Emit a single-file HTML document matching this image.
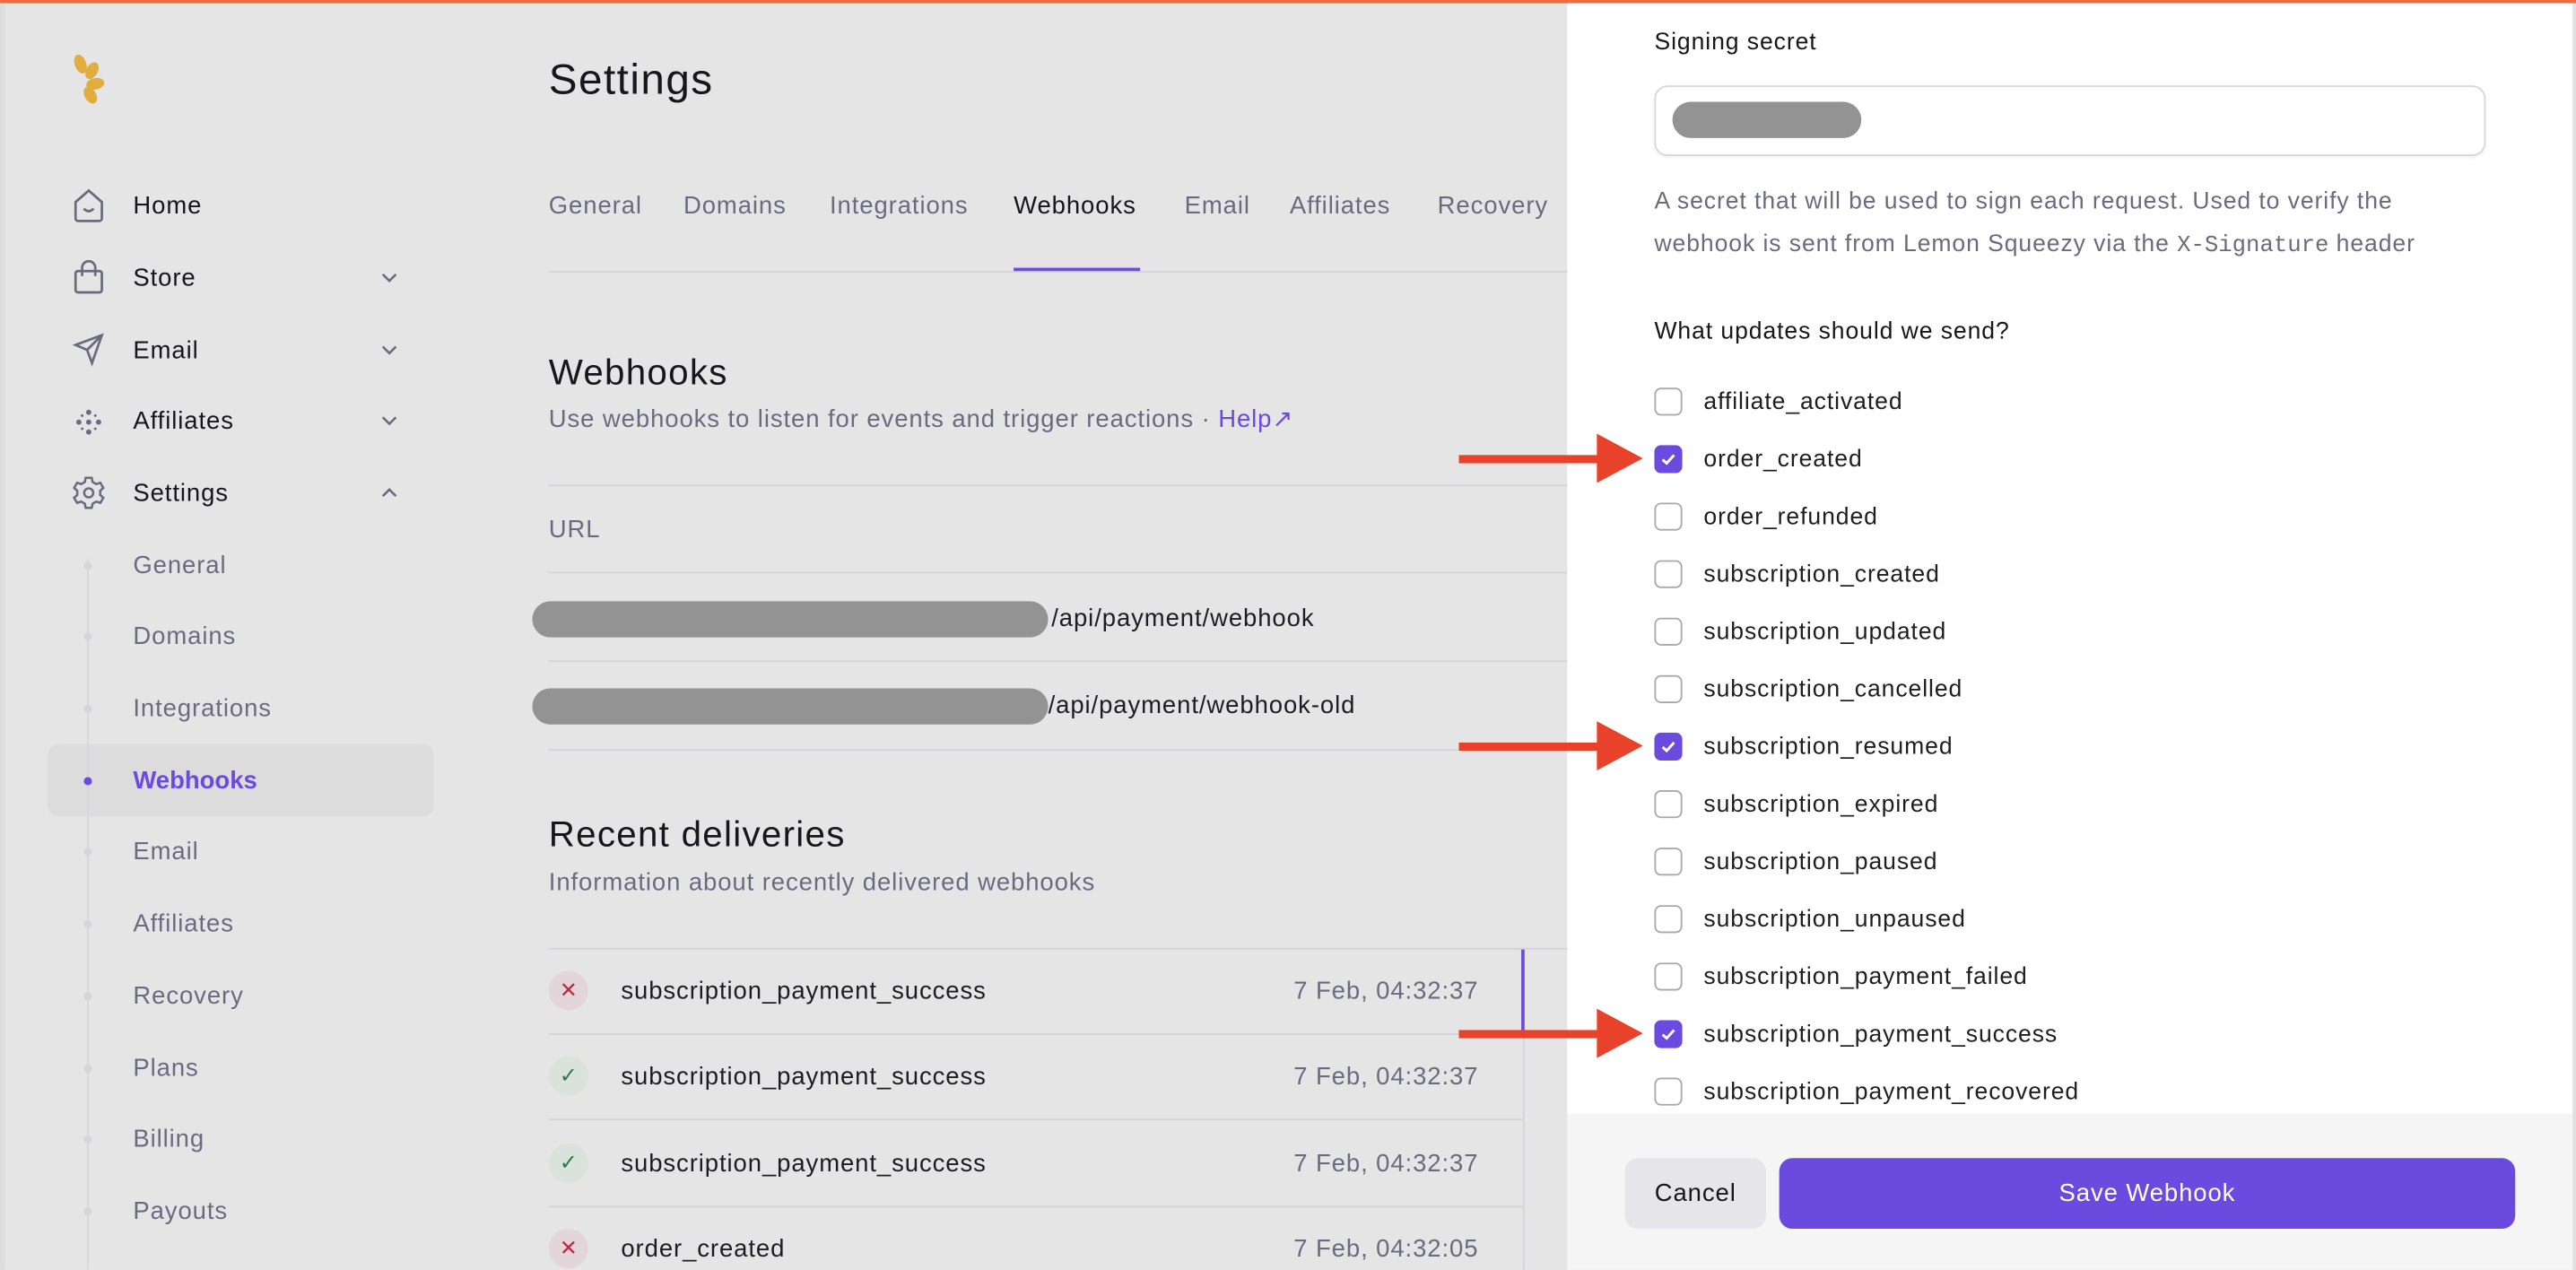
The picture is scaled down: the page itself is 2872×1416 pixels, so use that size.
<!DOCTYPE html>
<html><head><meta charset="utf-8">
<style>
*{margin:0;padding:0;box-sizing:border-box}
html,body{width:2872px;height:1416px;overflow:hidden;background:#e5e5e5}
#s{position:absolute;left:0;top:0;width:1568px;height:773px;transform:scale(1.83163);transform-origin:0 0;font-family:"Liberation Sans",sans-serif;background:#e5e5e6;overflow:hidden;letter-spacing:.5px}
.a{position:absolute;white-space:nowrap}
.t{line-height:20px;transform:translateY(-9px)}
.nav{font-size:15px;color:#17161c;left:81px}
.sub{font-size:15px;color:#6b6a80;left:81px}
.dot{position:absolute;left:51px;width:5px;height:5px;border-radius:50%;background:#d6d6da}
.tab{font-size:15px;color:#6b6a80;top:125px}
.hl{position:absolute;height:1px;background:#d3d3d9}
.pill{position:absolute;background:#939393;border-radius:11px}
.ic{position:absolute;left:334px;width:24px;height:24px;border-radius:50%;font-size:13px;text-align:center;line-height:24px;letter-spacing:0}
.name{left:378px;font-size:15px;color:#1e1d24}
.date{right:668px;font-size:15px;color:#6b6a80}
.cb{position:absolute;left:1007px;width:17px;height:17px;border:1.5px solid #a9a9ad;border-radius:4px;background:#fff}
.cb.on{background:#6b4ae0;border-color:#6b4ae0}
.cl{left:1037px;font-size:14.5px;color:#1e1d24}
.arr{position:absolute;left:888px;width:112px;height:30px}
</style></head><body>
<div id="s">
<div style="position:absolute;left:0;top:0;width:1568px;height:2px;background:#ef6a3e"></div>
<div style="position:absolute;left:0;top:2px;width:3px;height:771px;background:#dcdcdc"></div>
<!-- logo -->
<svg class="a" style="left:43px;top:32px" width="26" height="32" viewBox="0 0 26 32">
<ellipse cx="6" cy="7" rx="3.5" ry="6" fill="#e2ad3f" transform="rotate(-20 6 7)"/>
<ellipse cx="13" cy="11" rx="3.5" ry="5.5" fill="#e2ad3f" transform="rotate(30 13 11)"/>
<ellipse cx="15" cy="19" rx="3.5" ry="5.5" fill="#e2ad3f" transform="rotate(80 15 19)"/>
<ellipse cx="12" cy="26" rx="3.5" ry="5.5" fill="#e2ad3f" transform="rotate(-30 12 26)"/>
</svg>
<!-- nav icons -->
<svg class="a" style="left:44px;top:114px" width="20" height="22" viewBox="0 0 20 22" fill="none" stroke="#6b6a80" stroke-width="1.5"><path d="M2 9 L10 2 L18 9 V19 a1.5 1.5 0 0 1 -1.5 1.5 H3.5 A1.5 1.5 0 0 1 2 19Z"/><path d="M7 13 q3 3 6 0"/></svg>
<svg class="a" style="left:44px;top:158px" width="20" height="22" viewBox="0 0 20 22" fill="none" stroke="#6b6a80" stroke-width="1.5"><rect x="2" y="7" width="16" height="13" rx="1.5"/><path d="M6 10 V5 a4 4 0 0 1 8 0 V10"/></svg>
<svg class="a" style="left:44px;top:202px" width="20" height="22" viewBox="0 0 20 22" fill="none" stroke="#6b6a80" stroke-width="1.5"><path d="M2 8 L18 2 L12 19 L9 11 Z M9 11 L18 2"/></svg>
<svg class="a" style="left:44px;top:246px" width="20" height="22" viewBox="0 0 20 22" fill="#6b6a80"><circle cx="10" cy="5" r="1.6"/><circle cx="10" cy="11" r="1.6"/><circle cx="10" cy="17" r="1.6"/><circle cx="4" cy="11" r="1.6"/><circle cx="16" cy="11" r="1.6"/><circle cx="6" cy="7" r=".8"/><circle cx="14" cy="7" r=".8"/><circle cx="6" cy="15" r=".8"/><circle cx="14" cy="15" r=".8"/></svg>
<svg class="a" style="left:43px;top:288px" width="22" height="24" viewBox="0 0 24 24" fill="none" stroke="#6b6a80" stroke-width="1.5"><circle cx="12" cy="12" r="3"/><path d="M10 2h4l.6 2.8 2.4 1.4 2.7-.9 2 3.4-2.1 1.9v2.8l2.1 1.9-2 3.4-2.7-.9-2.4 1.4L14 22h-4l-.6-2.8-2.4-1.4-2.7.9-2-3.4 2.1-1.9v-2.8L2.3 8.7l2-3.4 2.7.9 2.4-1.4Z"/></svg>
<div class="a t nav" style="top:125px">Home</div>
<div class="a t nav" style="top:169px">Store</div>
<div class="a t nav" style="top:213px">Email</div>
<div class="a t nav" style="top:256px">Affiliates</div>
<div class="a t nav" style="top:300px">Settings</div>
<svg class="a" style="left:232px;top:165px" width="10" height="8" viewBox="0 0 10 8" fill="none" stroke="#6b6a80" stroke-width="1.4"><path d="M1 2 L5 6 L9 2"/></svg>
<svg class="a" style="left:232px;top:209px" width="10" height="8" viewBox="0 0 10 8" fill="none" stroke="#6b6a80" stroke-width="1.4"><path d="M1 2 L5 6 L9 2"/></svg>
<svg class="a" style="left:232px;top:252px" width="10" height="8" viewBox="0 0 10 8" fill="none" stroke="#6b6a80" stroke-width="1.4"><path d="M1 2 L5 6 L9 2"/></svg>
<svg class="a" style="left:232px;top:296px" width="10" height="8" viewBox="0 0 10 8" fill="none" stroke="#6b6a80" stroke-width="1.4"><path d="M1 6 L5 2 L9 6"/></svg>
<!-- sub nav -->
<div style="position:absolute;left:29px;top:453px;width:235px;height:44px;border-radius:7px;background:#dcdcdd"></div>
<div style="position:absolute;left:53px;top:340px;width:1px;height:433px;background:#d6d6da"></div>
<div class="dot" style="top:342px"></div><div class="dot" style="top:385px"></div><div class="dot" style="top:429px"></div>
<div class="dot" style="top:473px;background:#6b4ae0"></div>
<div class="dot" style="top:516px"></div><div class="dot" style="top:560px"></div><div class="dot" style="top:604px"></div><div class="dot" style="top:648px"></div><div class="dot" style="top:691px"></div><div class="dot" style="top:735px"></div>
<div class="a t sub" style="top:344px">General</div>
<div class="a t sub" style="top:387px">Domains</div>
<div class="a t sub" style="top:431px">Integrations</div>
<div class="a t sub" style="top:475px;color:#6b4ae0;font-weight:bold;letter-spacing:0">Webhooks</div>
<div class="a t sub" style="top:518px">Email</div>
<div class="a t sub" style="top:562px">Affiliates</div>
<div class="a t sub" style="top:606px">Recovery</div>
<div class="a t sub" style="top:650px">Plans</div>
<div class="a t sub" style="top:693px">Billing</div>
<div class="a t sub" style="top:737px">Payouts</div>
<!-- main -->
<div class="a" style="left:334px;top:31px;font-size:26px;color:#17161c;line-height:34px;letter-spacing:.8px">Settings</div>
<div class="a t tab" style="left:334px">General</div>
<div class="a t tab" style="left:416px">Domains</div>
<div class="a t tab" style="left:505px">Integrations</div>
<div class="a t tab" style="left:617px;color:#17161c">Webhooks</div>
<div class="a t tab" style="left:721px">Email</div>
<div class="a t tab" style="left:785px">Affiliates</div>
<div class="a t tab" style="left:875px">Recovery</div>
<div class="hl" style="left:334px;top:165px;width:620px"></div>
<div style="position:absolute;left:617px;top:163px;width:77px;height:2px;background:#6b4ae0"></div>
<div class="a" style="left:334px;top:213px;font-size:22px;color:#17161c;line-height:28px;letter-spacing:.7px">Webhooks</div>
<div class="a t" style="left:334px;top:255px;font-size:15px;color:#6b6a80">Use webhooks to listen for events and trigger reactions · <span style="color:#6b4ae0">Help↗</span></div>
<div class="hl" style="left:334px;top:295px;width:620px"></div>
<div class="a t" style="left:334px;top:322px;font-size:15px;color:#6b6a80">URL</div>
<div class="hl" style="left:334px;top:348px;width:620px"></div>
<div class="pill" style="left:324px;top:366px;width:314px;height:22px"></div>
<div class="a t" style="left:640px;top:376px;font-size:15px;color:#1e1d24">/api/payment/webhook</div>
<div class="hl" style="left:334px;top:402px;width:620px"></div>
<div class="pill" style="left:324px;top:419px;width:314px;height:22px"></div>
<div class="a t" style="left:638px;top:429px;font-size:15px;color:#1e1d24">/api/payment/webhook-old</div>
<div class="hl" style="left:334px;top:456px;width:620px"></div>
<div class="a" style="left:334px;top:494px;font-size:22px;color:#17161c;line-height:28px;letter-spacing:.7px">Recent deliveries</div>
<div class="a t" style="left:334px;top:537px;font-size:15px;color:#6b6a80">Information about recently delivered webhooks</div>
<div class="hl" style="left:334px;top:577px;width:620px"></div>
<div class="hl" style="left:334px;top:629px;width:594px"></div>
<div class="hl" style="left:334px;top:681px;width:594px"></div>
<div class="hl" style="left:334px;top:734px;width:594px"></div>
<div style="position:absolute;left:927px;top:577px;width:1px;height:196px;background:#d3d3d9"></div>
<div style="position:absolute;left:926px;top:578px;width:2px;height:51px;background:#6b4ae0"></div>
<div class="ic" style="top:591px;background:#e3d6da;color:#c0283d">✕</div>
<div class="ic" style="top:643px;background:#d9e3dc;color:#2f7a45">✓</div>
<div class="ic" style="top:696px;background:#d9e3dc;color:#2f7a45">✓</div>
<div class="ic" style="top:748px;background:#e3d6da;color:#c0283d">✕</div>
<div class="a t name" style="top:603px">subscription_payment_success</div>
<div class="a t name" style="top:655px">subscription_payment_success</div>
<div class="a t name" style="top:708px">subscription_payment_success</div>
<div class="a t name" style="top:760px">order_created</div>
<div class="a t date" style="top:603px">7 Feb, 04:32:37</div>
<div class="a t date" style="top:655px">7 Feb, 04:32:37</div>
<div class="a t date" style="top:708px">7 Feb, 04:32:37</div>
<div class="a t date" style="top:760px">7 Feb, 04:32:05</div>
<!-- panel -->
<div style="position:absolute;left:954px;top:2px;width:612px;height:676px;background:#fff"></div>
<div style="position:absolute;left:954px;top:678px;width:612px;height:95px;background:#f5f5f6"></div>
<div class="a t" style="left:1007px;top:25px;font-size:14.5px;color:#17161c">Signing secret</div>
<div style="position:absolute;left:1007px;top:52px;width:506px;height:43px;border:1px solid #d8d8dc;border-radius:8px;background:#fff;box-shadow:0 1px 2px rgba(0,0,0,.06)"></div>
<div class="pill" style="left:1018px;top:62px;width:115px;height:22px"></div>
<div class="a" style="left:1007px;top:110px;font-size:14.5px;color:#6b6a80;line-height:26px">A secret that will be used to sign each request. Used to verify the<br>webhook is sent from Lemon Squeezy via the <span style="font-family:'Liberation Mono',monospace;font-size:14px;letter-spacing:0">X-Signature</span> header</div>
<div class="a t" style="left:1007px;top:201px;font-size:14.5px;color:#17161c">What updates should we send?</div>
<div class="cb" style="top:236px"></div><div class="a t cl" style="top:244px">affiliate_activated</div>
<div class="cb on" style="top:271px"></div><div class="a t cl" style="top:279px">order_created</div>
<div class="cb" style="top:306px"></div><div class="a t cl" style="top:314px">order_refunded</div>
<div class="cb" style="top:341px"></div><div class="a t cl" style="top:349px">subscription_created</div>
<div class="cb" style="top:376px"></div><div class="a t cl" style="top:384px">subscription_updated</div>
<div class="cb" style="top:411px"></div><div class="a t cl" style="top:419px">subscription_cancelled</div>
<div class="cb on" style="top:446px"></div><div class="a t cl" style="top:454px">subscription_resumed</div>
<div class="cb" style="top:481px"></div><div class="a t cl" style="top:489px">subscription_expired</div>
<div class="cb" style="top:516px"></div><div class="a t cl" style="top:524px">subscription_paused</div>
<div class="cb" style="top:551px"></div><div class="a t cl" style="top:559px">subscription_unpaused</div>
<div class="cb" style="top:586px"></div><div class="a t cl" style="top:594px">subscription_payment_failed</div>
<div class="cb on" style="top:621px"></div><div class="a t cl" style="top:629px">subscription_payment_success</div>
<div class="cb" style="top:656px"></div><div class="a t cl" style="top:664px">subscription_payment_recovered</div>
<svg class="a" style="left:1009px;top:273px" width="13" height="13" viewBox="0 0 13 13" fill="none" stroke="#fff" stroke-width="1.6"><path d="M3 6.8 L5.5 9 L10 4"/></svg>
<svg class="a" style="left:1009px;top:448px" width="13" height="13" viewBox="0 0 13 13" fill="none" stroke="#fff" stroke-width="1.6"><path d="M3 6.8 L5.5 9 L10 4"/></svg>
<svg class="a" style="left:1009px;top:623px" width="13" height="13" viewBox="0 0 13 13" fill="none" stroke="#fff" stroke-width="1.6"><path d="M3 6.8 L5.5 9 L10 4"/></svg>
<!-- arrows -->
<svg class="arr" style="top:264px" viewBox="0 0 112 30"><rect x="0" y="13" width="88" height="5" fill="#e8432a"/><path d="M84 0 L112 15 L84 30Z" fill="#e8432a"/></svg>
<svg class="arr" style="top:439px" viewBox="0 0 112 30"><rect x="0" y="13" width="88" height="5" fill="#e8432a"/><path d="M84 0 L112 15 L84 30Z" fill="#e8432a"/></svg>
<svg class="arr" style="top:614px" viewBox="0 0 112 30"><rect x="0" y="13" width="88" height="5" fill="#e8432a"/><path d="M84 0 L112 15 L84 30Z" fill="#e8432a"/></svg>
<!-- buttons -->
<div class="a" style="left:989px;top:705px;width:86px;height:43px;border-radius:8px;background:#e6e6ea;font-size:15px;color:#17161c;text-align:center;line-height:44px">Cancel</div>
<div class="a" style="left:1083px;top:705px;width:448px;height:43px;border-radius:8px;background:#6b4ae0;font-size:15px;color:#fff;text-align:center;line-height:44px">Save Webhook</div>
<div style="position:absolute;left:1566px;top:2px;width:2px;height:771px;background:#e0e0e0"></div>
</div>
</body></html>
